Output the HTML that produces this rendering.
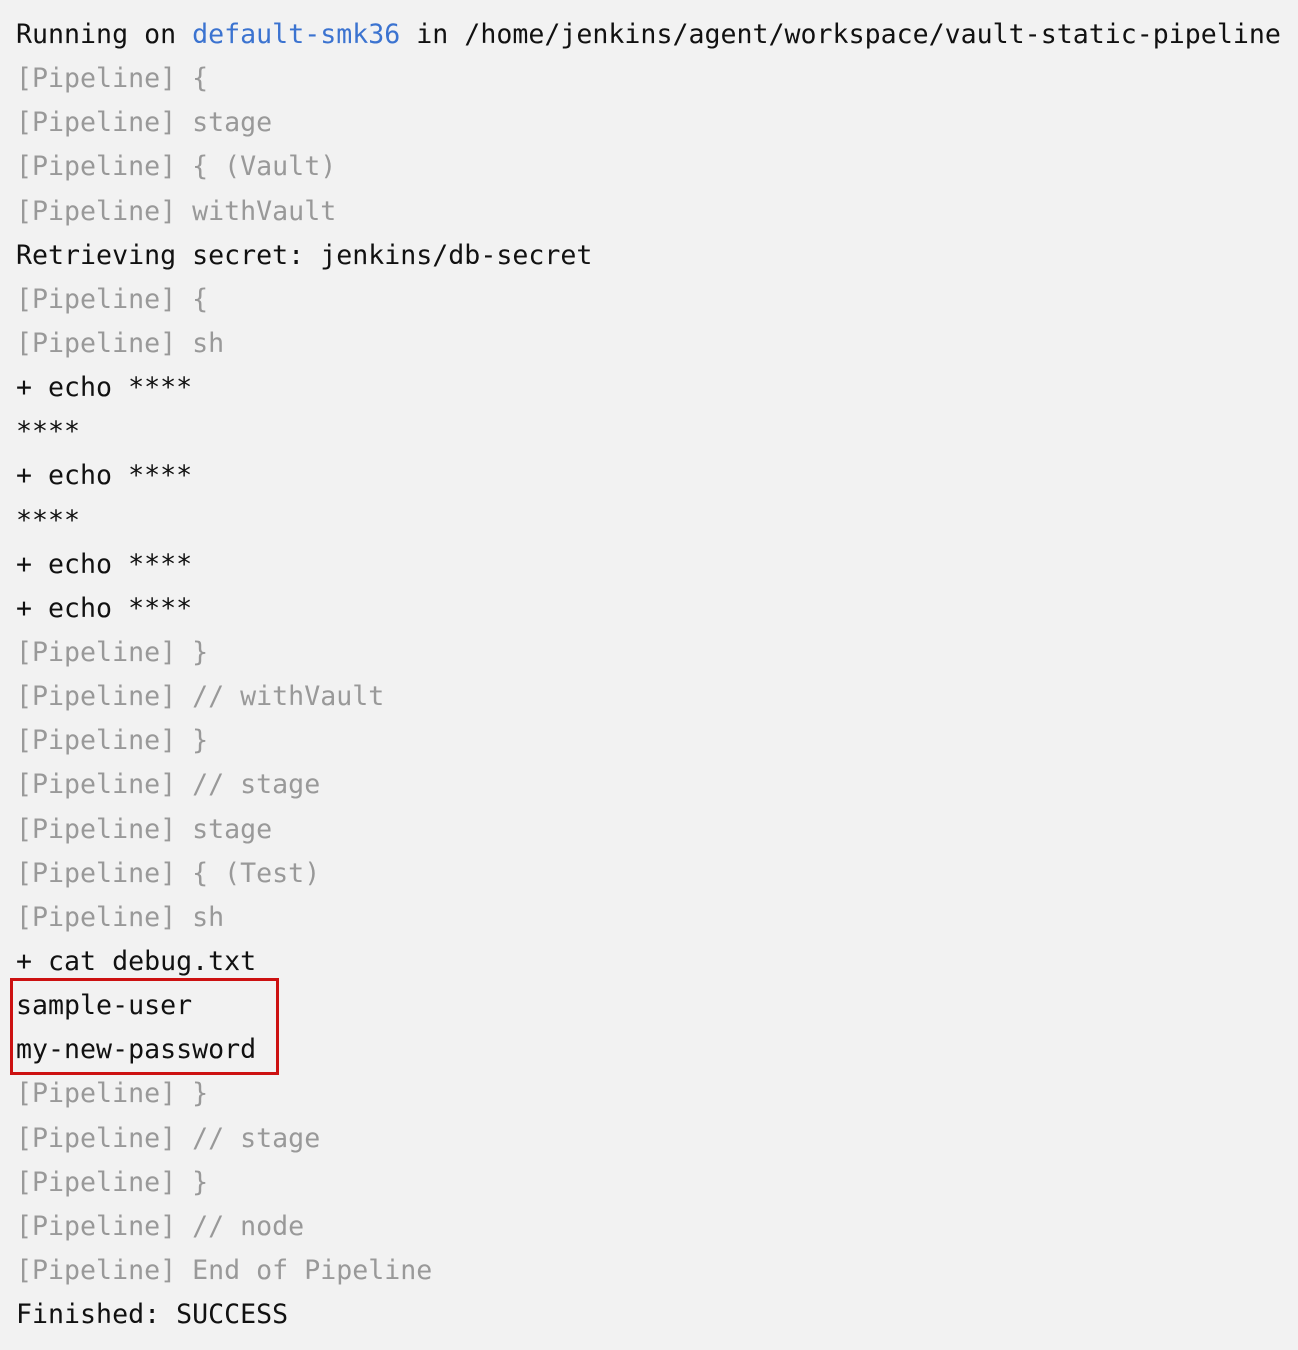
<!DOCTYPE html>
<html><head><meta charset="utf-8"><style>
html,body{margin:0;padding:0;background:#f2f2f2;width:1298px;height:1350px;overflow:hidden}
pre{position:absolute;left:16px;top:13px;margin:0;font-family:"DejaVu Sans Mono","Liberation Mono",monospace;font-size:26.6px;line-height:44.14px;color:#111;white-space:pre}
.g{color:#999}
.b{color:#3b73d0}
.box{position:absolute;left:10px;top:978px;width:263px;height:91px;border:3px solid #cc1111}
</style></head><body>
<pre>Running on <span class="b">default-smk36</span> in /home/jenkins/agent/workspace/vault-static-pipeline
<span class="g">[Pipeline] {</span>
<span class="g">[Pipeline] stage</span>
<span class="g">[Pipeline] { (Vault)</span>
<span class="g">[Pipeline] withVault</span>
Retrieving secret: jenkins/db-secret
<span class="g">[Pipeline] {</span>
<span class="g">[Pipeline] sh</span>
+ echo ****
****
+ echo ****
****
+ echo ****
+ echo ****
<span class="g">[Pipeline] }</span>
<span class="g">[Pipeline] // withVault</span>
<span class="g">[Pipeline] }</span>
<span class="g">[Pipeline] // stage</span>
<span class="g">[Pipeline] stage</span>
<span class="g">[Pipeline] { (Test)</span>
<span class="g">[Pipeline] sh</span>
+ cat debug.txt
sample-user
my-new-password
<span class="g">[Pipeline] }</span>
<span class="g">[Pipeline] // stage</span>
<span class="g">[Pipeline] }</span>
<span class="g">[Pipeline] // node</span>
<span class="g">[Pipeline] End of Pipeline</span>
Finished: SUCCESS</pre>
<div class="box"></div>
</body></html>
